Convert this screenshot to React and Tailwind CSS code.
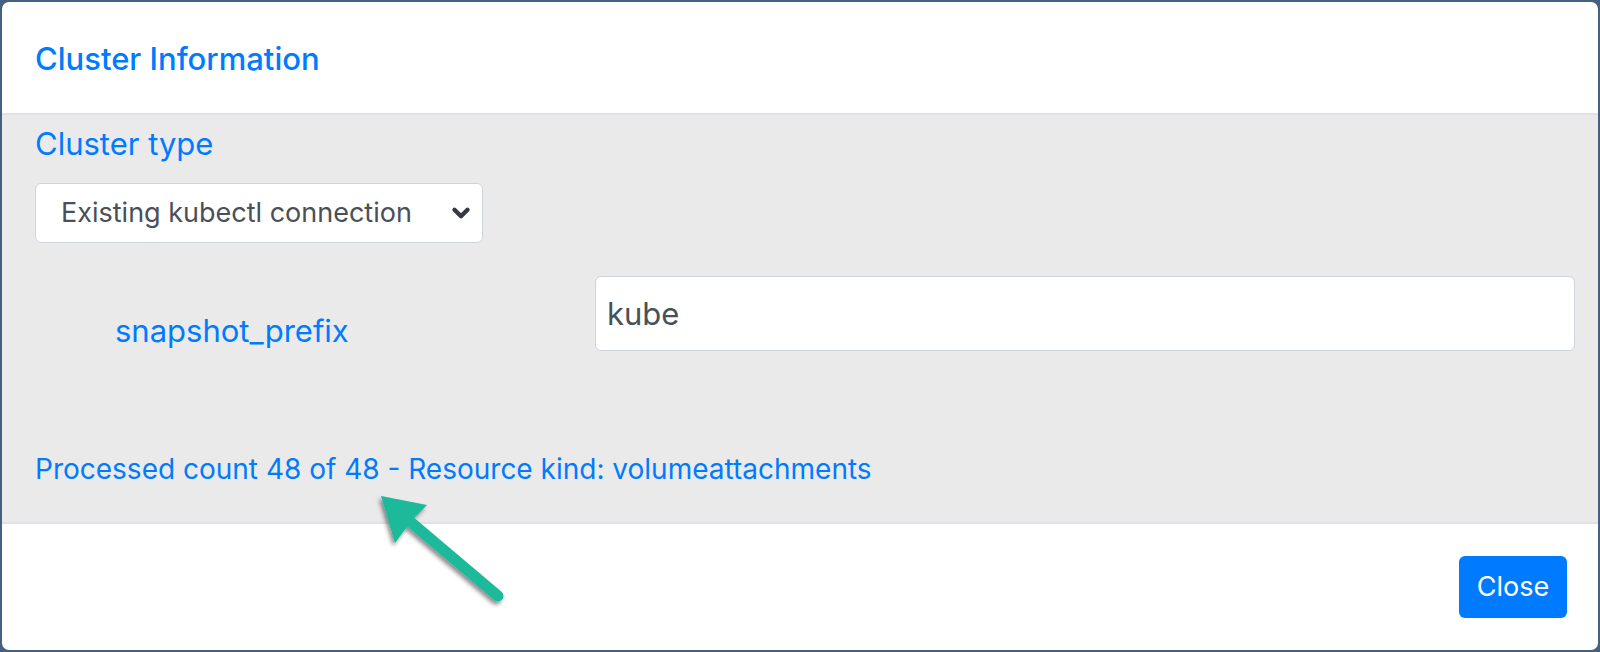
import { ChevronDown } from "lucide-react";

const font = { fontFamily: "Inter, 'Liberation Sans', sans-serif" };

const PointerArrow = () => (
  <svg className="pointer-events-none absolute left-0 top-0" width="1600" height="652" viewBox="0 0 1600 652">
    <defs>
      <filter id="arrowShadow" x="-20%" y="-20%" width="140%" height="140%">
        <feDropShadow dx="-2" dy="3" stdDeviation="2" floodColor="#000" floodOpacity="0.45" />
      </filter>
    </defs>
    <g filter="url(#arrowShadow)">
      <line x1="407" y1="519" x2="498" y2="596" stroke="#1bb99a" strokeWidth="11" strokeLinecap="round" />
      <path d="M381 496 L427 505 L412 520 L395 543 Z" fill="#1bb99a" />
    </g>
  </svg>
);

export default function App() {
  return (
    <div className="relative h-[652px] w-full bg-[#46617f] p-[2px]" style={font}>
      <div className="flex h-[648px] flex-col overflow-hidden rounded-[7px] bg-white">
        <div className="flex h-[113px] shrink-0 items-center border-b-2 border-[#dee2e6] px-[33px] pt-[3px]">
          <h5 className="text-[31px] font-medium leading-[1.2] text-[#007bff]">Cluster Information</h5>
        </div>

        <div className="h-[407px] shrink-0 bg-[#eaeaea] pl-[33px] pr-[23px] pt-[10px]">
          <p className="text-[31px] leading-[1.2] text-[#007bff]">Cluster type</p>

          <div className="mt-[21px] flex h-[60px] w-[448px] items-center justify-between rounded-[6px] border border-[#ced4da] bg-white pl-[25px] pr-[8px]">
            <span className="text-[27px] text-[#495057]">Existing kubectl connection</span>
            <ChevronDown size={26} strokeWidth={4} className="text-[#343a40]" />
          </div>

          <div className="mt-[33px] flex items-start">
            <div className="w-[560px] shrink-0 pl-[80px] pt-[36px]">
              <span className="text-[31px] leading-[1.2] text-[#007bff]">snapshot_prefix</span>
            </div>
            <input
              readOnly
              value="kube"
              className="h-[75px] flex-1 rounded-[6px] border border-[#ced4da] bg-white px-[11px] text-[31px] text-[#495057] outline-none"
              style={font}
            />
          </div>

          <p className="mt-[102px] text-[28px] leading-[1.2] text-[#007bff]">
            Processed count 48 of 48 - Resource kind: volumeattachments
          </p>
        </div>

        <div className="flex flex-1 items-center justify-end border-t-2 border-[#dee2e6] pr-[31px]">
          <button type="button" className="h-[62px] w-[108px] rounded-[6px] bg-[#007bff] text-[27px] text-white">
            Close
          </button>
        </div>
      </div>
      <PointerArrow />
    </div>
  );
}
